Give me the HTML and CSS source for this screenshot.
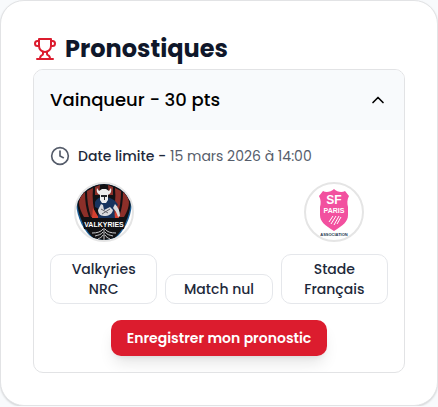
FILE: index.html
```html
<!DOCTYPE html>
<html lang="fr">
<head>
<meta charset="utf-8">
<meta name="viewport" content="width=device-width, initial-scale=1">
<title>Pronostiques</title>
<link rel="stylesheet" href="styles.css">
</head>
<body>
<main class="card">
  <h2 class="title">
    <svg class="icon trophy" viewBox="0 0 24 24" aria-hidden="true"><path d="M6 9H4.500a2.500 2.500 0 0 1 0-5H6"/><path d="M18 9h1.500a2.500 2.500 0 0 0 0-5H18"/><path d="M4 22h16"/><path d="M10 14.660V17c0 .550-.470.980-.970 1.210C7.850 18.750 7 20.240 7 22"/><path d="M14 14.660V17c0 .550.470.980.970 1.210C16.150 18.750 17 20.240 17 22"/><path d="M18 2H6v7a6 6 0 0 0 12 0V2Z"/></svg>
    Pronostiques
  </h2>
  <section class="panel">
    <h3 class="heading">
      <button class="toggle" type="button" aria-expanded="true" aria-controls="bet">
        Vainqueur - 30 pts
        <svg class="icon small" viewBox="0 0 24 24" aria-hidden="true"><path d="m18 15-6-6-6 6"/></svg>
      </button>
    </h3>
    <form class="content" id="bet">
      <p class="deadline">
        <svg class="icon small" viewBox="0 0 24 24" aria-hidden="true"><circle cx="12" cy="12" r="10"/><path d="M12 6v6l4 2"/></svg>
        <span><strong>Date limite -</strong> 15 mars 2026 à 14:00</span>
      </p>
      <div class="choices">
        <div class="team">
          <svg class="logo" viewBox="0 0 56 56" aria-hidden="true">
            <path d="M28 0C12 0 2 8 0 19c1 16 8 28 18 37h20c10-9 17-21 18-37C54 8 44 0 28 0Z" fill="#1d5f97"/>
            <path d="M28 0C13 0 3 8 1 17c1 16 8 29 18 39h18c10-10 17-23 18-39C53 8 43 0 28 0Z" fill="#121114"/>
            <g fill="#8c2f29">
              <path d="M3 18c1-5 3-8 6-10 0 9 1 17 4 25H8C5 28 3 23 3 18Z"/>
              <path d="M11 7l6-3c-1 10 0 20 3 29h-5c-3-9-4-17-4-26Z"/>
              <path d="M53 18c-1-5-3-8-6-10 0 9-1 17-4 25h5c3-5 5-10 5-15Z"/>
              <path d="M45 7l-6-3c1 10 0 20-3 29h5c3-9 4-17 4-26Z"/>
              <path d="M19 3l5-2-1 10h-4ZM37 3l-5-2 1 10h4Z"/>
            </g>
            <path d="M17 24l6 10h-7zM42 24l-6 10h7z" fill="#d4402f"/>
            <path d="M19 18c2-4 5-5 9-5 6 0 12 3 14 8l-4 4 1 9H22l1-9-4-2Z" fill="#17335e"/>
            <path d="M21 4c-1 4 1 6 3 7v5l2 3h4l2-3v-5c2-1 4-3 3-7l-2 3-3-2h-4l-3 2Z" fill="#ededee"/>
            <path d="M25 11h6v2h-2v3h-1v-3h-3Z" fill="#24262c"/>
            <path d="M25 20l-3 6c0 3 2 6 6 6 5 0 8-2 9-6l-3-3-6 3-1-5Z" fill="#dadadd"/>
            <path d="M39 20c3 3 5 7 5 12l-2 1c-1-4-3-7-5-9Z" fill="#dadadd"/>
            <path d="M25 25l7 4m-6 1 8-5" stroke="#62636a" fill="none"/>
            <path d="M6 34h44l-2 11-8 1-12-4-12 4-8-1Z" fill="#121114"/>
            <text class="mark valkyries" x="28" y="43">VALKYRIES</text>
            <path d="M28 44v12M27 45c-2 3-6 4-11 4M27 48c-2 3-5 3-8 4M27 51c-1 2-3 3-5 4M29 45c2 3 6 4 11 4M29 48c2 3 5 3 8 4M29 51c1 2 3 3 5 4" fill="none" stroke="#c9c9cc"/>
          </svg>
          <button class="choice" type="button">Valkyries NRC</button>
        </div>
        <div class="team">
          <button class="choice" type="button">Match nul</button>
        </div>
        <div class="team">
          <svg class="logo" viewBox="0 0 56 56" aria-hidden="true">
            <path d="M28 5c-3 3-8 4-11 2l-4 5c2 4 2 7 1 11v8c0 7 5 10 14 16 9-6 14-9 14-16v-8c-1-4-1-7 1-11l-4-5c-3 2-8 1-11-2Z" fill="#f2509f"/>
            <text class="mark sf" x="28" y="20">SF</text>
            <text class="mark paris" x="28" y="29">PARIS</text>
            <path d="M27 32l-4 6M30 32l-5 8M33 32l-5 9M35 33l-4 7" stroke="#fff" fill="none"/>
            <text class="mark association" x="28" y="52">ASSOCIATION</text>
          </svg>
          <button class="choice" type="button">Stade Français</button>
        </div>
      </div>
      <button class="save" type="submit">Enregistrer mon pronostic</button>
    </form>
  </section>
</main>
</body>
</html>
```
FILE: styles.css
```css
* {
  box-sizing: border-box;
}

body {
  margin: 0;
  background: #f8fafc;
  color: #0f172a;
  font-family: Poppins, Inter, sans-serif;
  font-size: 14px;
  line-height: 20px;
}

h2, h3, p {
  margin: 0;
}

button {
  font: inherit;
  color: inherit;
  cursor: pointer;
}

.card {
  padding: 32px;
  border: 1px solid #e2e3e5;
  border-radius: 24px;
  background: #fff;
  box-shadow: 0 1px 2px rgb(0 0 0 / 15%);
}

.title {
  display: flex;
  align-items: center;
  gap: 8px;
  margin-bottom: 4px;
  font-size: 24px;
  line-height: 32px;
  font-weight: 700;
}

.icon {
  flex: none;
  width: 24px;
  height: 24px;
  fill: none;
  stroke: currentColor;
  stroke-width: 2;
  stroke-linecap: round;
  stroke-linejoin: round;
}

.small {
  width: 20px;
  height: 20px;
}

.trophy {
  color: #dc1c2e;
}

.panel {
  overflow: hidden;
  border: 1px solid #e2e3e5;
  border-radius: 10px;
}

.heading {
  font-size: 18px;
  line-height: 28px;
  font-weight: 500;
}

.toggle {
  display: flex;
  align-items: center;
  justify-content: space-between;
  width: 100%;
  padding: 16px;
  border: 0;
  background: #f8fafc;
  color: #000;
  text-align: left;
}

.content {
  display: flex;
  flex-direction: column;
  gap: 16px;
  padding: 16px;
}

.deadline {
  display: flex;
  align-items: center;
  gap: 8px;
  color: #565d6b;
}

.deadline strong {
  color: #1e293b;
  font-weight: 500;
}

.choices {
  display: grid;
  grid-template-columns: repeat(3, 1fr);
  align-items: end;
  gap: 8px;
}

.team {
  display: flex;
  flex-direction: column;
  align-items: center;
  gap: 12px;
}

.logo {
  width: 60px;
  height: 60px;
  border: 2px solid #e5e5e5;
  border-radius: 50%;
  background: #fff;
}

.mark {
  font-family: "Liberation Sans", sans-serif;
  font-weight: 700;
  text-anchor: middle;
  fill: #fff;
}

.valkyries {
  font-size: 7px;
}

.sf {
  font-size: 12px;
}

.paris {
  font-size: 7px;
}

.association {
  font-size: 4px;
  fill: #26364f;
}

.choice {
  width: 100%;
  padding: 4px 16px;
  border: 1px solid #e5e7eb;
  border-radius: 10px;
  background: #fff;
  color: #1e293b;
  font-weight: 500;
}

.save {
  align-self: center;
  padding: 8px 16px;
  border: 0;
  border-radius: 10px;
  background: #dc1c2e;
  box-shadow: 0 10px 15px -3px rgb(0 0 0 / 10%), 0 4px 6px -4px rgb(0 0 0 / 10%);
  color: #fff;
  font-weight: 600;
}
```
